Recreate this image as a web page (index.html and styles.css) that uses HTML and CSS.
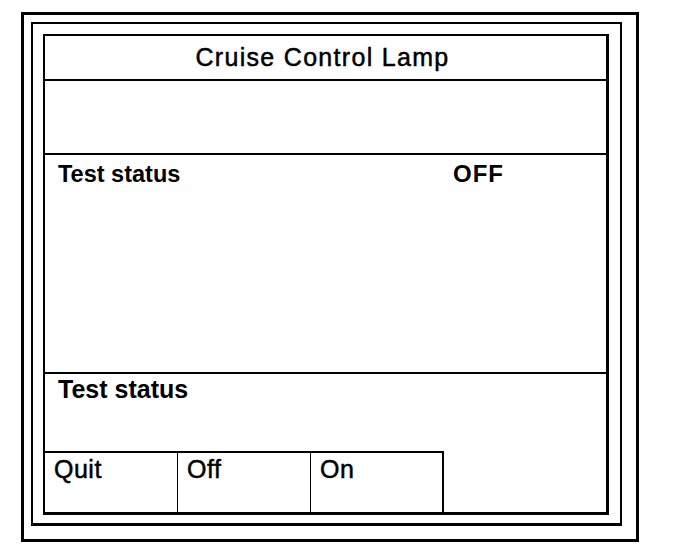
FILE: index.html
```html
<!DOCTYPE html>
<html lang="en">
<head>
    <meta charset="UTF-8">
    <title>Cruise Control Lamp</title>
    <link rel="stylesheet" href="styles.css">
</head>
<body>
<div class="frame-outer">
    <div class="frame-middle">
        <div class="screen">
            <div class="title-row">Cruise Control Lamp</div>
            <div class="blank-row"></div>
            <div class="status-row">
                <span class="status-label">Test status</span>
                <span class="status-value">OFF</span>
            </div>
            <div class="message-row">Test status</div>
            <div class="button-row">
                <div class="key">Quit</div>
                <div class="key">Off</div>
                <div class="key key-last">On</div>
            </div>
        </div>
    </div>
</div>
</body>
</html>
```

FILE: styles.css
```css
body {
    margin: 0;
    background: #fff;
    color: #000;
    font-family: 'Liberation Sans', Arial, sans-serif;
}

/* marcos dobles alrededor de la pantalla */
.frame-outer {
    width: fit-content;
    margin: 12px 0 0 21px;
    border: 3px solid #000;
    padding: 7px 14px 13px 7px;
}

.frame-middle {
    border: 2px solid #000;
    border-bottom-width: 3px;
    padding: 10px 11px 8px 10px;
}

.screen {
    width: 561px;
    border: solid #000;
    border-width: 2px 3px 3px 2px;
    display: flex;
    flex-direction: column;
}

.title-row {
    height: 43px;
    border-bottom: 2px solid #000;
    display: flex;
    align-items: center;
    justify-content: center;
    font-size: 25px;
    line-height: 25px;
    letter-spacing: 1.3px;
    padding-right: 6px;
    -webkit-text-stroke: 0.5px #000;
}

.blank-row {
    height: 72px;
    border-bottom: 2px solid #000;
}

.status-row {
    height: 210px;
    border-bottom: 2px solid #000;
    padding: 7px 13px 0;
    display: flex;
    align-items: baseline;
}

    .status-label {
        width: 395px;
        font-size: 23.5px;
        line-height: 24px;
        font-weight: bold;
    }

    .status-value {
        font-size: 24px;
        line-height: 24px;
        font-weight: bold;
        letter-spacing: 1px;
    }

.message-row {
    height: 74px;
    padding: 3px 13px 0;
    font-size: 25px;
    line-height: 25px;
    font-weight: bold;
}

.button-row {
    display: flex;
    height: 61px;
}

.key {
    width: 123px;
    border-top: 2px solid #000;
    border-right: 1px solid #000;
    padding: 4px 0 0 9px;
    font-size: 25px;
    line-height: 25px;
    letter-spacing: 0.5px;
    -webkit-text-stroke: 0.5px #000;
}

    .key-last {
        width: 122px;
        border-right-width: 2px;
    }
```
